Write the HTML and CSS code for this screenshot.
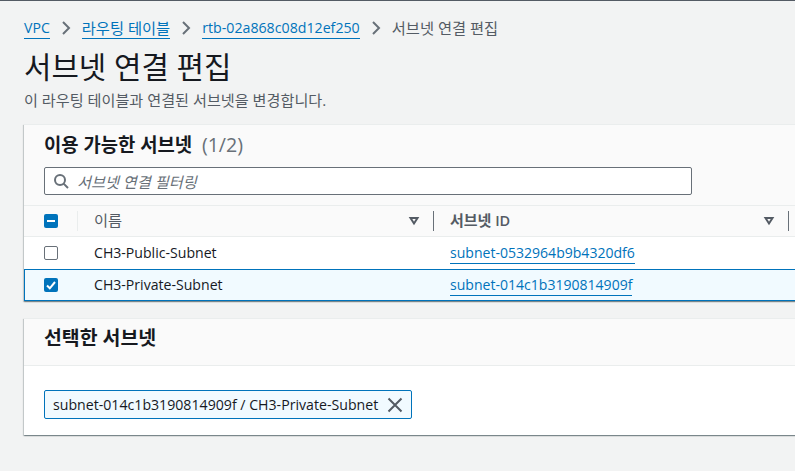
FILE: index.html
```html
<!DOCTYPE html>
<html lang="ko">
<head>
    <meta charset="UTF-8">
    <title>서브넷 연결 편집</title>
    <link rel="stylesheet" href="styles.css">
</head>
<body>

<nav class="breadcrumbs">
    <a href="#">VPC</a>
    <svg class="crumb-sep" viewBox="0 0 16 16"><path d="M5 2l6 6-6 6"/></svg>
    <a href="#" class="ko">라우팅 테이블</a>
    <svg class="crumb-sep" viewBox="0 0 16 16"><path d="M5 2l6 6-6 6"/></svg>
    <a href="#" class="crumb-id">rtb-02a868c08d12ef250</a>
    <svg class="crumb-sep" viewBox="0 0 16 16"><path d="M5 2l6 6-6 6"/></svg>
    <span class="ko">서브넷 연결 편집</span>
</nav>

<h1>서브넷 연결 편집</h1>
<p class="subtitle">이 라우팅 테이블과 연결된 서브넷을 변경합니다.</p>

<section class="card">
    <div class="card-head">
        <h2>이용 가능한 서브넷 <span class="count">(1/2)</span></h2>
        <div class="filter">
            <svg class="filter-icon" viewBox="0 0 16 16"><circle cx="7" cy="7" r="5"/><path d="M10.6 10.6L15 15"/></svg>
            <span>서브넷 연결 필터링</span>
        </div>
    </div>

    <div class="row row-header">
        <div class="cell-check">
            <span class="box box-on"><svg viewBox="0 0 14 14"><path d="M3 7h8"/></svg></span>
        </div>
        <div class="cell-name">
            <span class="th-name ko">이름</span>
            <svg class="sort" viewBox="0 0 12 12"><path d="M2.5 3h7L6 8.5z"/></svg>
        </div>
        <div class="cell-id">
            <span class="th-id"><span class="ko">서브넷</span> ID</span>
            <svg class="sort" viewBox="0 0 12 12"><path d="M2.5 3h7L6 8.5z"/></svg>
        </div>
    </div>

    <div class="row row-public">
        <div class="cell-check"><span class="box"></span></div>
        <div class="cell-name">CH3-Public-Subnet</div>
        <div class="cell-id"><a href="#">subnet-0532964b9b4320df6</a></div>
    </div>

    <div class="row row-selected">
        <div class="cell-check">
            <span class="box box-on"><svg viewBox="0 0 14 14"><path d="M3 7.5l2.8 2.8L11 4"/></svg></span>
        </div>
        <div class="cell-name">CH3-Private-Subnet</div>
        <div class="cell-id"><a href="#">subnet-014c1b3190814909f</a></div>
    </div>
</section>

<section class="card card-selected">
    <div class="card-title">
        <h2>선택한 서브넷</h2>
    </div>
    <div class="card-body">
        <div class="token">
            <span>subnet-014c1b3190814909f / CH3-Private-Subnet</span>
            <svg class="token-x" viewBox="0 0 16 16"><path d="M1.5 1.5l13 13M14.5 1.5l-13 13"/></svg>
        </div>
    </div>
</section>

</body>
</html>
```

FILE: styles.css
```css
html {
    overflow: hidden;
}

body {
    font-family: "Open Sans", "Noto Sans CJK KR", sans-serif;
    font-size: 14.1px;
    color: #16191f;
    background-color: #f2f3f3;
    margin: 0;
    padding: 0 0 0 24px;
    width: 900px;
    height: 471px;
    overflow: hidden;
    box-sizing: border-box;
    border-top: 1px solid #545b64;
}

a {
    color: #0073bb;
    text-decoration: none;
    border-bottom: 1px solid #0073bb;
}

.ko {
    font-size: 15.3px;
}

.breadcrumbs {
    display: flex;
    align-items: center;
    height: 20px;
    margin-top: 17px;
    color: #545b64;
    line-height: 20px;
}

.crumb-id {
    font-size: 14.2px;
}

.crumb-sep {
    width: 16px;
    height: 16px;
    margin: 0 8px;
    fill: none;
    stroke: #687078;
    stroke-width: 2;
}

h1 {
    font-size: 29.8px;
    font-weight: 400;
    line-height: 36px;
    margin: 11px 0 0;
}

.subtitle {
    font-size: 15.15px;
    line-height: 20px;
    color: #545b64;
    margin: 5px 0 0;
}

.card {
    background-color: #fff;
    border-top: 1px solid #eaeded;
    box-shadow: 0 1px 1px 0 rgba(0, 28, 36, 0.3), 1px 1px 1px 0 rgba(0, 28, 36, 0.15), -1px 1px 1px 0 rgba(0, 28, 36, 0.15);
    margin-top: 14px;
}

.card-head {
    background-color: #fafafa;
    padding: 8px 0 10px 20px;
}

h2 {
    font-size: 18.8px;
    font-weight: 700;
    line-height: 24px;
    margin: 0;
}

.count {
    font-size: 19.6px;
    font-weight: 400;
    color: #687078;
    margin-left: 5px;
}

.filter {
    display: flex;
    align-items: center;
    box-sizing: border-box;
    width: 648px;
    height: 28px;
    margin-top: 10px;
    padding-left: 8px;
    background-color: #fff;
    border: 1px solid #687078;
    border-radius: 2px;
    color: #687078;
    font-style: italic;
    font-size: 15.2px;
}

.filter-icon {
    width: 16px;
    height: 16px;
    margin-right: 8px;
    fill: none;
    stroke: #687078;
    stroke-width: 2;
}

.row {
    display: flex;
    align-items: center;
    box-sizing: border-box;
    border-top: 1px solid #eaeded;
    background-color: #fff;
    line-height: 20px;
}

.row-header {
    height: 31px;
    background-color: #fafafa;
    font-weight: 600;
    color: #545b64;
}

.row-public {
    height: 33px;
}

.row-selected {
    height: 32px;
    background-color: #f1faff;
    border: 1px solid #0073bb;
}

.cell-check {
    display: flex;
    align-items: center;
    width: 54px;
    padding-left: 20px;
    box-sizing: border-box;
    height: 20px;
}

.row-selected .cell-check {
    width: 53px;
    padding-left: 19px;
}

.row-header .cell-check {
    border-right: 1px solid #eaeded;
}

.box {
    display: block;
    box-sizing: border-box;
    width: 14px;
    height: 14px;
    border: 1px solid #687078;
    border-radius: 2px;
    background-color: #fff;
}

.box-on {
    border: none;
    background-color: #0073bb;
}

.box svg {
    display: block;
    width: 14px;
    height: 14px;
    fill: none;
    stroke: #fff;
    stroke-width: 2;
}

.cell-name,
.cell-id {
    display: flex;
    align-items: center;
    justify-content: space-between;
    box-sizing: border-box;
    width: 356px;
    padding: 0 8px 0 16px;
    height: 20px;
}

.cell-id {
    width: 355px;
}

.cell-id a {
    font-size: 14.05px;
}

.row-header .cell-name,
.row-header .cell-id {
    border-right: 1px solid #687078;
}

.th-name {
    font-weight: 400;
    line-height: 18px;
    margin-top: -2px;
}

.th-id {
    font-size: 14.5px;
    line-height: 18px;
    margin-top: -2px;
}

.th-id .ko {
    font-size: 15px;
}

.sort {
    width: 12px;
    height: 12px;
    fill: none;
    stroke: #545b64;
    stroke-width: 2;
    margin-right: 5px;
}

.card-selected {
    margin-top: 17px;
}

.card-title {
    background-color: #fafafa;
    padding: 7px 0 15px 20px;
    border-bottom: 1px solid #eaeded;
}

.card-title h2 {
    font-size: 19.4px;
}

.card-body {
    padding: 24px 20px 16px;
}

.token {
    display: inline-flex;
    align-items: center;
    box-sizing: border-box;
    height: 29px;
    padding: 0 8px 0 8px;
    background-color: #f1faff;
    border: 1px solid #0073bb;
    border-radius: 2px;
    vertical-align: top;
    font-size: 14.15px;
}

.token-x {
    width: 16px;
    height: 16px;
    margin-left: 9px;
    fill: none;
    stroke: #545b64;
    stroke-width: 2;
}
```
